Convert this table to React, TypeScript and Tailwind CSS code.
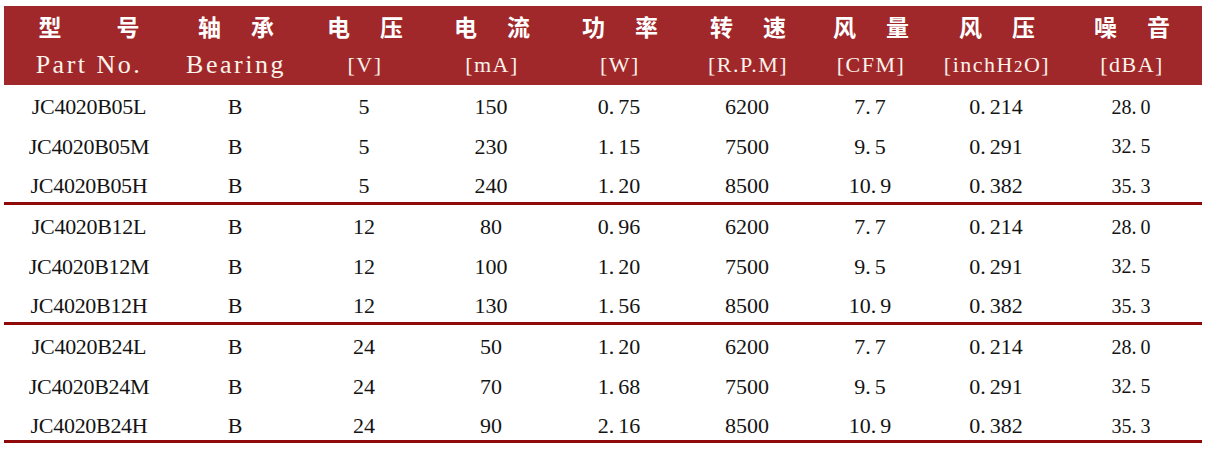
import React from "react";

type Row = [string, string, string, string, string, string, string, string, string];

const headers: { zh: [string, string]; en: string; wide?: boolean }[] = [
  { zh: ["型", "号"], en: "Part No.", wide: true },
  { zh: ["轴", "承"], en: "Bearing" },
  { zh: ["电", "压"], en: "[V]" },
  { zh: ["电", "流"], en: "[mA]" },
  { zh: ["功", "率"], en: "[W]" },
  { zh: ["转", "速"], en: "[R.P.M]" },
  { zh: ["风", "量"], en: "[CFM]" },
  { zh: ["风", "压"], en: "[inchH2O]" },
  { zh: ["噪", "音"], en: "[dBA]" },
];

const groups: Row[][] = [
  [
    ["JC4020B05L", "B", "5", "150", "0.75", "6200", "7.7", "0.214", "28.0"],
    ["JC4020B05M", "B", "5", "230", "1.15", "7500", "9.5", "0.291", "32.5"],
    ["JC4020B05H", "B", "5", "240", "1.20", "8500", "10.9", "0.382", "35.3"],
  ],
  [
    ["JC4020B12L", "B", "12", "80", "0.96", "6200", "7.7", "0.214", "28.0"],
    ["JC4020B12M", "B", "12", "100", "1.20", "7500", "9.5", "0.291", "32.5"],
    ["JC4020B12H", "B", "12", "130", "1.56", "8500", "10.9", "0.382", "35.3"],
  ],
  [
    ["JC4020B24L", "B", "24", "50", "1.20", "6200", "7.7", "0.214", "28.0"],
    ["JC4020B24M", "B", "24", "70", "1.68", "7500", "9.5", "0.291", "32.5"],
    ["JC4020B24H", "B", "24", "90", "2.16", "8500", "10.9", "0.382", "35.3"],
  ],
];

const COLS = "grid grid-cols-[168px_126px_132px_122px_134px_122px_124px_128px_142px]";
const SERIF = "font-['Liberation_Serif','Noto_Sans_CJK_SC',serif]";

// Decimal points in the source font are half-width, so pad them a little
function Num({ value }: { value: string }) {
  const parts = value.split(".");
  if (parts.length === 1) return <>{value}</>;
  return (
    <>
      {parts[0]}
      <span className="tracking-[4px]">.</span>
      {parts[1]}
    </>
  );
}

export default function App() {
  return (
    <div className="w-[1207px] h-[450px] bg-white pt-[6px] pl-[4px]">
      <div className="w-[1198px]">
        {/* Header band */}
        <div className={`${COLS} bg-[#a0282b] h-[79px] pl-[1px] text-white`}>
          {headers.map((h, i) => (
            <div key={i} className="flex flex-col items-center">
              <div
                className={`flex justify-center h-[40px] items-center font-['Noto_Sans_CJK_SC',sans-serif] font-bold text-[23px] ${
                  h.wide ? "gap-[55px]" : "gap-[30px]"
                }`}
              >
                <span>{h.zh[0]}</span>
                <span>{h.zh[1]}</span>
              </div>
              <div
                className={`${SERIF} h-[39px] leading-[38px] text-[#fbf3ea] ${
                  i < 2 ? "text-[26px] tracking-[2.5px]" : "text-[22px] tracking-[1.5px]"
                }`}
              >
                {h.en === "[inchH2O]" ? (
                  <>
                    [inchH<span className="text-[17px]">2</span>O]
                  </>
                ) : (
                  h.en
                )}
              </div>
            </div>
          ))}
        </div>

        {/* Data groups */}
        {groups.map((group, gi) => (
          <div
            key={gi}
            className={`border-b-[3px] border-[#8e0a0a] pt-[2px] ${gi === 2 ? "h-[118px]" : "h-[120px]"}`}
          >
            {group.map((row, ri) => (
              <div key={ri} className={`${COLS} h-[39.5px] items-center text-[#141414] ${SERIF}`}>
                {row.map((cell, ci) => (
                  <div
                    key={ci}
                    className={`text-center ${ci === 8 ? "text-[20px]" : "text-[22px]"} ${
                      ci === 0 ? "tracking-[-0.3px] pl-[2px]" : ""
                    }`}
                  >
                    {ci >= 4 ? <Num value={cell} /> : cell}
                  </div>
                ))}
              </div>
            ))}
          </div>
        ))}
      </div>
    </div>
  );
}
